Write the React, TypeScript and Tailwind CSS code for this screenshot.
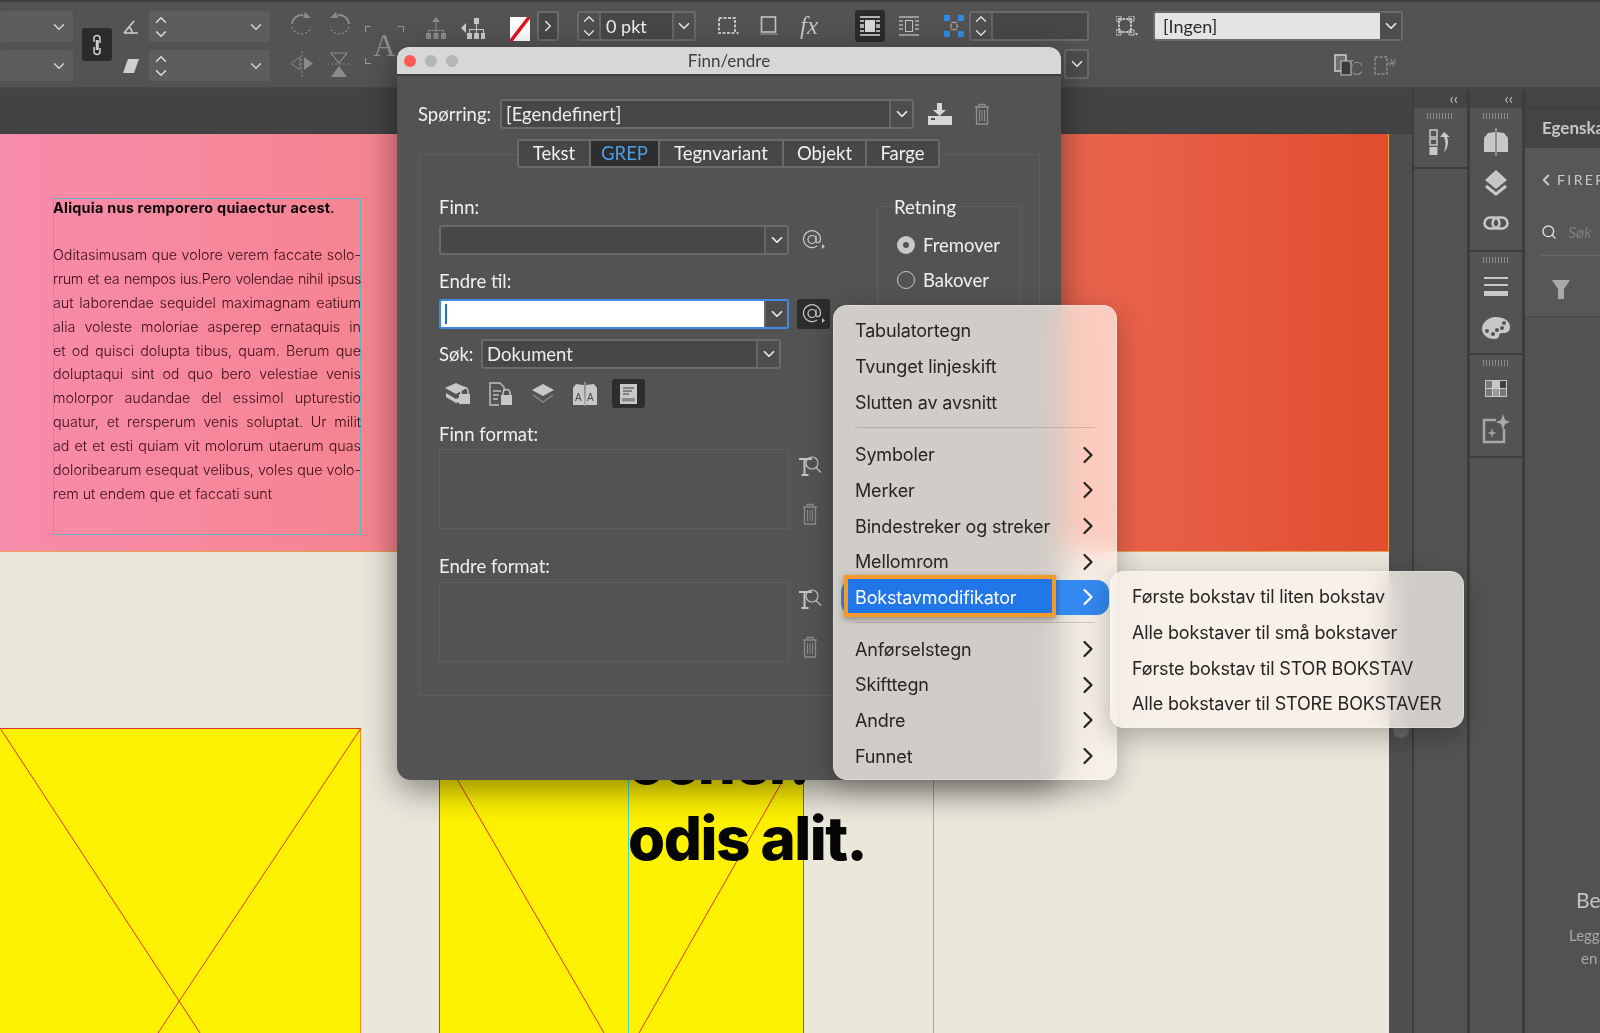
import { ChevronDown, ChevronRight, ChevronUp, ChevronLeft, Search } from "lucide-react";
import type { ReactNode } from "react";

const bodyLines = [
  "Oditasimusam que volore verem faccate solo-",
  "rrum et ea nempos ius.Pero volendae nihil ipsus",
  "aut laborendae sequidel maximagnam eatium",
  "alia voleste moloriae asperep ernataquis in",
  "et od quisci dolupta tibus, quam. Berum que",
  "doluptaqui sint od quo bero velestiae venis",
  "molorpor audandae del essimol upturestio",
  "quatur, et rersperum venis soluptat. Ur milit",
  "ad et et esti quiam vit molorum utaerum quas",
  "doloribearum esequat velibus, voles que volo-",
];

const menuTop = ["Tabulatortegn", "Tvunget linjeskift", "Slutten av avsnitt"];
const menuMid = ["Symboler", "Merker", "Bindestreker og streker", "Mellomrom"];
const menuEnd = ["Anførselstegn", "Skifttegn", "Andre", "Funnet"];
const subItems = [
  "Første bokstav til liten bokstav",
  "Alle bokstaver til små bokstaver",
  "Første bokstav til STOR BOKSTAV",
  "Alle bokstaver til STORE BOKSTAVER",
];

function Ico({ w, h, children, className }: { w: number; h: number; children: ReactNode; className?: string }) {
  return (
    <svg width={w} height={h} viewBox={`0 0 ${w} ${h}`} className={className} fill="none">
      {children}
    </svg>
  );
}

function Stepper() {
  return (
    <div className="flex flex-col items-center justify-center text-[#e2e2e2]">
      <ChevronUp size={18} strokeWidth={1.8} />
      <ChevronDown size={18} strokeWidth={1.8} className="-mt-[4px]" />
    </div>
  );
}

function DimField({ w, stepper }: { w: string; stepper?: boolean }) {
  return (
    <div className={`h-[31px] ${w} bg-[#5d5d5d] rounded-[2px] flex items-center justify-between pl-[3px] pr-[5px] text-[#d4d4d4]`}>
      {stepper ? <Stepper /> : <span />}
      <ChevronDown size={18} strokeWidth={2} />
    </div>
  );
}

function Trash({ c = "#8f8f8f" }: { c?: string }) {
  return (
    <Ico w={16} h={22}>
      <path d="M1 4h14M5 4V1.500h6V4M2.500 4v17h11V4" stroke={c} strokeWidth="1.300" />
      <path d="M5.500 7v11M8 7v11M10.500 7v11" stroke={c} strokeWidth="1" />
    </Ico>
  );
}

function TypeSearch() {
  return (
    <Ico w={24} h={22}>
      <path d="M1 4h13M6.500 4v15M3.500 20h7" stroke="#c4c4c4" strokeWidth="2" />
      <circle cx="14" cy="8" r="6" stroke="#c4c4c4" strokeWidth="1.200" />
      <path d="M18 12.500l5 5" stroke="#c4c4c4" strokeWidth="1.300" />
    </Ico>
  );
}

function AtButton({ active }: { active?: boolean }) {
  return (
    <div className={`w-[33px] h-[30px] rounded-[3px] flex items-center justify-center ${active ? "bg-[#2d2d2d]" : ""}`}>
      <Ico w={24} h={22}>
        <circle cx="10" cy="10.500" r="4" stroke="#c9c9c9" strokeWidth="1.200" />
        <path d="M14 6.500v5.500c0 2.600 4.500 2.600 4.500-2a8.500 8.500 0 1 0-3.500 7" stroke="#c9c9c9" strokeWidth="1.200" />
        <path d="M20 15l3 2.500-3 2.500z" fill="#c9c9c9" />
      </Ico>
    </div>
  );
}

function ComboField({ w, sep, light, focus, children }: { w: string; sep: string; light?: boolean; focus?: boolean; children?: ReactNode }) {
  return (
    <div className={`h-[30px] ${w} flex rounded-[3px] border-2 overflow-hidden ${focus ? "border-[#3f8be6]" : "border-[#6a6a6a]"}`}>
      <div className={`${sep} shrink-0 flex items-center pl-[4px] leading-none ${light ? "bg-white text-[#2a2a2a]" : "bg-[#474747] text-[#ececec]"}`}>
        {children}
      </div>
      <div className="flex-1 flex items-center justify-center bg-[#4d4d4d] border-l-2 border-[#666666] text-[#efefef]">
        <ChevronDown size={18} strokeWidth={2.2} />
      </div>
    </div>
  );
}

function Toolbar() {
  return (
    <div className="h-[89px] shrink-0 bg-[#535353] border-t-2 border-b-2 border-t-[#3b3b3b] border-b-[#474747] flex items-start pt-[9px]">
      <div className="w-[73px] flex flex-col gap-[8px]">
        <DimField w="w-[73px]" />
        <DimField w="w-[73px]" />
      </div>
      <div className="ml-[9px] mt-[17px] w-[30px] h-[33px] bg-[#2b2b2b] rounded-[3px] flex items-center justify-center">
        <Ico w={12} h={22}>
          <path d="M3 8V4.500a3 3 0 0 1 6 0V9M9 14v3.500a3 3 0 0 1-6 0V13M5.500 6v10M7 6v10" stroke="#d0d0d0" strokeWidth="1.500" />
        </Ico>
      </div>
      <div className="w-[37px] flex flex-col gap-[8px] items-center">
        <div className="h-[31px] flex items-center">
          <Ico w={16} h={14}>
            <path d="M1 13h14M1 13L11 1M9 13c0-3-1.500-5-3.500-6" stroke="#cfcfcf" strokeWidth="1.600" />
          </Ico>
        </div>
        <div className="h-[31px] flex items-center">
          <Ico w={16} h={14}>
            <path d="M5 0h11l-5 14H0z" fill="#cfcfcf" />
          </Ico>
        </div>
      </div>
      <div className="w-[121px] flex flex-col gap-[8px]">
        <DimField w="w-[121px]" stepper />
        <DimField w="w-[121px]" stepper />
      </div>
      <div className="ml-[20px] w-[60px] grid grid-cols-2 gap-y-[11px] gap-x-[14px]">
        <Ico w={24} h={29}>
          <path d="M13 4a10 10 0 0 0-11 9" stroke="#8a8a8a" strokeWidth="2" />
          <path d="M15 1l6 6h-8z" fill="#8a8a8a" />
          <path d="M2 16a10 10 0 0 0 19 0" stroke="#8a8a8a" strokeWidth="1.400" strokeDasharray="2 2" />
        </Ico>
        <Ico w={24} h={29}>
          <path d="M11 4a10 10 0 0 1 11 9" stroke="#8a8a8a" strokeWidth="2" />
          <path d="M9 1l-6 6h8z" fill="#8a8a8a" />
          <path d="M22 16a10 10 0 0 1-19 0" stroke="#8a8a8a" strokeWidth="1.400" strokeDasharray="2 2" />
        </Ico>
        <Ico w={24} h={26}>
          <path d="M10 6L1 12.500l9 6.500z" stroke="#8a8a8a" strokeWidth="1" />
          <path d="M14 6v13l9-6.500z" fill="#8a8a8a" />
          <path d="M12 0v26" stroke="#8a8a8a" strokeDasharray="2 2" />
        </Ico>
        <Ico w={24} h={26}>
          <path d="M4 2h16l-8 10z" stroke="#8a8a8a" strokeWidth="1.200" />
          <path d="M0 13h24" stroke="#8a8a8a" strokeDasharray="2 2" />
          <path d="M4 26h16l-8-11z" fill="#8a8a8a" />
        </Ico>
      </div>
      <div className="ml-[15px] mt-[15px] w-[39px] h-[38px] flex items-center justify-center relative">
        <span className="absolute left-0 top-0 w-[6px] h-[6px] border-l border-t border-[#9a9a9a]" />
        <span className="absolute left-0 bottom-0 w-[6px] h-[6px] border-l border-b border-[#9a9a9a]" />
        <span className="absolute right-0 top-0 w-[6px] h-[6px] border-r border-t border-[#9a9a9a]" />
        <span className="text-[#8f8f8f] text-[31px] leading-none font-['Liberation_Serif',serif]">A</span>
      </div>
      <div className="ml-[22px] mt-[6px] flex items-center gap-[15px]">
        <Ico w={20} h={24}>
          <path d="M10 0l4 5H6zM9.500 5h1v7h-1zM2 13h16v3h-1v-2H3v2H2zM9.500 12h1v4h-1zM0 16h5v6H0zM7.500 16h5v6h-5zM15 16h5v6h-5z" fill="#8a8a8a" />
        </Ico>
        <Ico w={24} h={24}>
          <path d="M0 11l5-5v10z" fill="#c9c9c9" />
          <path d="M13 1h5v6h-5zM15 7h1v5h-1zM8 12h15v1H8zM8 13h1v3H8zM15 13h1v3h-1zM22 13h1v3h-1zM6 16h5v6H6zM13 16h5v6h-5zM20 16h4v6h-4z" fill="#c9c9c9" />
        </Ico>
        <Ico w={20} h={24} className="ml-[10px]">
          <rect width="20" height="24" fill="#fff" />
          <path d="M0 25L20 -1" stroke="#e2141c" strokeWidth="3.500" />
        </Ico>
      </div>
      <div className="ml-[7px] w-[22px] h-[30px] border-2 border-[#6a6a6a] rounded-[3px] bg-[#474747] flex items-center justify-center text-[#e5e5e5]">
        <ChevronRight size={18} strokeWidth={2} />
      </div>
      <div className="ml-[18px] w-[119px] h-[30px] border-2 border-[#6a6a6a] rounded-[3px] flex overflow-hidden">
        <div className="w-[22px] shrink-0 bg-[#4f4f4f] border-r-2 border-[#666666] flex items-center justify-center">
          <Stepper />
        </div>
        <div className="w-[71px] bg-[#474747] text-[#f0f0f0] text-[18px] leading-[26px] pl-[5px]">0 pkt</div>
        <div className="flex-1 bg-[#4f4f4f] border-l-2 border-[#666666] flex items-center justify-center text-[#e5e5e5]">
          <ChevronDown size={18} strokeWidth={2.2} />
        </div>
      </div>
      <div className="ml-[21px] mt-[5px] flex gap-[21px]">
        <Ico w={22} h={20}>
          <rect x="2" y="2" width="16" height="15" stroke="#c4c4c4" strokeWidth="2" strokeDasharray="3 1.500" />
          <path d="M19 16l3 0-1.500 3z" fill="#c4c4c4" />
        </Ico>
        <Ico w={18} h={20}>
          <rect x="1.500" y="1" width="14" height="15" stroke="#c4c4c4" strokeWidth="1.600" />
          <rect x="0" y="17" width="18" height="2" fill="#7a7a7a" />
        </Ico>
        <span className="ml-[1px] text-[#c4c4c4] italic text-[25px] leading-[20px] font-['Liberation_Serif',serif]">fx</span>
      </div>
      <div className="ml-[37px] -mt-[1px] w-[30px] h-[32px] bg-[#2b2b2b] rounded-[3px] flex items-center justify-center">
        <Ico w={20} h={20}>
          <path d="M0 1h20M0 19h20M0 5h4M0 9h4M0 11h4M0 15h4M16 5h4M16 9h4M16 11h4M16 15h4" stroke="#e0e0e0" strokeWidth="1.500" />
          <rect x="5" y="4" width="10" height="12" fill="#d8d8d8" />
        </Ico>
      </div>
      <div className="ml-[14px] mt-[5px]">
        <Ico w={20} h={20}>
          <path d="M0 1h20M0 19h20M0 5h4M0 9h4M0 13h4M16 5h4M16 9h4M16 13h4" stroke="#b4b4b4" strokeWidth="1.300" />
          <rect x="6.500" y="4.500" width="7" height="11" stroke="#c4c4c4" />
        </Ico>
      </div>
      <div className="ml-[25px] mt-[4px]">
        <Ico w={20} h={22}>
          <path d="M7 7.500h6M7 14.500h6M7 9v4M13 9v4" stroke="#9a9a9a" strokeWidth="1.500" />
          <path d="M0 0h6v6H0zM14 0h6v6h-6zM0 16h6v6H0zM14 16h6v6h-6z" fill="#2f8ae5" />
        </Ico>
      </div>
      <div className="ml-[5px] w-[120px] flex flex-col gap-[8px] items-end">
        <div className="w-[120px] h-[30px] border-2 border-[#6a6a6a] rounded-[3px] flex overflow-hidden">
          <div className="w-[22px] shrink-0 bg-[#4f4f4f] border-r-2 border-[#666666] flex items-center justify-center">
            <Stepper />
          </div>
          <div className="flex-1 bg-[#474747]" />
        </div>
        <div className="w-[25px] h-[30px] border-2 border-[#6a6a6a] rounded-[3px] bg-[#4d4d4d] flex items-center justify-center text-[#e8e8e8]">
          <ChevronDown size={18} strokeWidth={2.2} />
        </div>
      </div>
      <div className="ml-[27px] mt-[5px]">
        <Ico w={22} h={20}>
          <rect x="3" y="3" width="12" height="13" stroke="#c4c4c4" strokeWidth="2" strokeDasharray="2.500 1" />
          <path d="M0 0h5v5H0zM13 0h5v5h-5zM0 14h5v5H0zM13 14h5v5h-5z" stroke="#c4c4c4" />
          <path d="M19 17h3l-1.500 3z" fill="#c4c4c4" />
        </Ico>
      </div>
      <div className="ml-[15px] flex flex-col items-end">
        <div className="h-[30px] w-[250px] border-2 border-[#6a6a6a] rounded-[3px] flex overflow-hidden">
          <div className="w-[225px] bg-[#e4e4e4] text-[#2b2b2b] text-[18px] leading-[26px] pl-[8px]">[Ingen]</div>
          <div className="flex-1 bg-[#4d4d4d] flex items-center justify-center text-[#efefef]">
            <ChevronDown size={18} strokeWidth={2.2} />
          </div>
        </div>
        <div className="mt-[13px] mr-[5px] flex gap-[12px]">
          <Ico w={28} h={24}>
            <rect x="1" y="1" width="11" height="16" fill="#6e6e6e" stroke="#d0d0d0" strokeWidth="1.500" />
            <rect x="7" y="7" width="10" height="14" fill="#3a3a3a" stroke="#c8c8c8" />
            <path d="M20 9a6 6 0 1 1-1 10M19 6l-3 3 3 3" stroke="#8f8f8f" strokeWidth="1.200" />
          </Ico>
          <Ico w={24} h={24}>
            <rect x="1" y="3" width="12" height="17" stroke="#8f8f8f" strokeWidth="1.500" strokeDasharray="3 1.500" />
            <path d="M15 12l7-7M17 5l3 8M14 9h8" stroke="#8f8f8f" />
          </Ico>
        </div>
      </div>
    </div>
  );
}

function Grip() {
  return <div className="mx-auto mt-[5px] w-[27px] h-[6px] bg-[repeating-linear-gradient(90deg,#8c8c8c_0_1px,transparent_1px_3px)]" />;
}

function Canvas() {
  return (
    <div className="relative flex-1 flex flex-col overflow-hidden">
      <div className="h-[418px] border-b border-r border-[#e8a050] bg-[linear-gradient(90deg,#f78cab_0%,#f6848f_28%,#eb6751_76%,#e04d2e_100%)]" />
      <div className="flex-1 bg-[#ebe7db]" />

      <div className="absolute left-[53px] top-[64px] w-[308px] h-[337px] border border-[#5fb6c6] text-[#3b0b16] font-['Inter',sans-serif]">
        <div className="-mx-px -mt-px">
          <p className="text-[14.4px] leading-[20px] text-[#0a0508] font-bold tracking-[0.25px] whitespace-nowrap">
            Aliquia nus remporero quiaectur acest<span className="font-normal">.</span>
          </p>
          <div className="mt-[25px] text-[14.3px] font-light">
            {bodyLines.map((line, i) => (
              <p
                key={line}
                className={`h-[23.9px] leading-[23.9px] text-justify [text-align-last:justify] whitespace-nowrap ${i === 1 ? "tracking-[-0.35px]" : ""}`}
              >
                {line}
              </p>
            ))}
            <p className="h-[23.9px] leading-[23.9px]">rem ut endem que et faccati sunt</p>
          </div>
        </div>
      </div>

      <svg width="361" height="305" viewBox="0 0 361 305" className="absolute left-[0px] top-[594px]">
        <rect x="-2" y="0.500" width="363" height="320" fill="#fff200" stroke="#e8302a" />
        <path d="M0 0L200 305M361 0L158 305" stroke="#e8302a" />
      </svg>
      <svg width="365" height="305" viewBox="0 0 365 305" className="absolute left-[439px] top-[594px]">
        <rect x="0.500" y="0.500" width="364" height="320" fill="#fff200" stroke="#e8302a" />
        <path d="M0 20L165 305M364 17L200 305" stroke="#e8302a" />
      </svg>
      <div className="absolute left-[628px] top-[594px] bottom-0 w-[306px] border-x border-[#3fd6d2]" />
      <div className="absolute left-[628px] top-[590px] text-[#050505] text-[60px] leading-[76px] font-extrabold tracking-[-1.5px] font-['Inter',sans-serif] whitespace-nowrap">
        <p>ocner.</p>
        <p>odis alit.</p>
      </div>
    </div>
  );
}

function Panels() {
  return (
    <div className="w-[188px] shrink-0 bg-[#3d3d3d] flex gap-[3px] pl-[2px]">
      <div className="w-[53px] flex flex-col gap-[2px]">
        <div className="h-[19px] bg-[#444444] text-[#c8c8c8] flex items-center justify-end pr-[9px] text-[15px] leading-none">‹‹</div>
        <div className="h-[59px] -mt-[2px] bg-[#535353]">
          <Grip />
          <div className="flex justify-center mt-[10px]">
            <Ico w={24} h={26}>
              <path d="M1 1h7v7H1zM1 10h7v6H1z" stroke="#c8c8c8" strokeWidth="1.500" />
              <rect x="0.500" y="18" width="8" height="8" fill="#c8c8c8" />
              <path d="M15 3l6 5-3 0c2 5 1 11-3 15 2-6 2-11 0-15h-4z" fill="#c8c8c8" />
            </Ico>
          </div>
        </div>
        <div className="flex-1 bg-[#535353]" />
      </div>
      <div className="w-[52px] flex flex-col gap-[2px]">
        <div className="h-[19px] bg-[#444444] text-[#c8c8c8] flex items-center justify-end pr-[9px] text-[15px] leading-none">‹‹</div>
        <div className="h-[142px] -mt-[2px] bg-[#535353] flex flex-col items-center">
          <Grip />
          <div className="mt-[9px]">
            <Ico w={26} h={28}>
              <path d="M12 4L5 5 1 10v14h11zM14 4l7 1 4 5v14H14z" fill="#c8c8c8" />
              <path d="M13 0v28" stroke="#c8c8c8" />
            </Ico>
          </div>
          <div className="mt-[14px]">
            <Ico w={24} h={26}>
              <path d="M12 0l11 10-11 9L1 10z" fill="#c8c8c8" />
              <path d="M2 16l10 8 10-8" stroke="#c8c8c8" strokeWidth="3" />
            </Ico>
          </div>
          <div className="mt-[20px]">
            <Ico w={26} h={14}>
              <rect x="1.500" y="1.500" width="15" height="11" rx="5.500" stroke="#c8c8c8" strokeWidth="2.500" />
              <rect x="9.500" y="1.500" width="15" height="11" rx="5.500" stroke="#c8c8c8" strokeWidth="2.500" />
            </Ico>
          </div>
        </div>
        <div className="h-[101px] bg-[#535353] flex flex-col items-center">
          <Grip />
          <div className="mt-[14px]">
            <Ico w={24} h={20}>
              <path d="M0 1h24M0 8h24" stroke="#c8c8c8" strokeWidth="2" />
              <rect y="14" width="24" height="5" fill="#c8c8c8" />
            </Ico>
          </div>
          <div className="mt-[20px]">
            <Ico w={28} h={22}>
              <path d="M14 0c8 0 14 4 14 10s-5 6-8 6c-2 0-3 1-3 3s-2 3-5 3C5 22 0 17 0 12 0 6 6 0 14 0z" fill="#c8c8c8" />
              <circle cx="5" cy="14" r="2" fill="#535353" />
              <circle cx="11" cy="17" r="2" fill="#535353" />
              <circle cx="15" cy="13" r="2" fill="#535353" />
              <circle cx="20" cy="11" r="2" fill="#535353" />
              <circle cx="22" cy="6" r="2" fill="#535353" />
            </Ico>
          </div>
        </div>
        <div className="h-[101px] bg-[#535353] flex flex-col items-center">
          <Grip />
          <div className="mt-[14px] w-[22px] h-[17px] grid grid-cols-3 grid-rows-2 gap-[1px] bg-[#c8c8c8] p-[1px]">
            <span className="bg-[#777777]" />
            <span className="bg-[#c8c8c8]" />
            <span className="bg-[#3f3f3f]" />
            <span className="bg-[#777777]" />
            <span className="bg-[#9a9a9a]" />
            <span className="bg-[#777777]" />
          </div>
          <div className="mt-[17px]">
            <Ico w={28} h={30}>
              <path d="M14 6H2v22h20V15" stroke="#a8a8a8" strokeWidth="2.500" />
              <path d="M21 0l2 6 5 2-5 2-2 6-2-6-5-2 5-2zM10 14l1 4 4 1-4 1-1 4-1-4-4-1 4-1z" fill="#a8a8a8" />
            </Ico>
          </div>
        </div>
        <div className="flex-1 bg-[#535353]" />
      </div>
      <div className="flex-1 min-w-0 overflow-hidden flex flex-col whitespace-nowrap font-['Lato',sans-serif]">
        <div className="h-[19px] bg-[#444444]" />
        <div className="h-[40px] bg-[#444444] border-t border-[#3d3d3d] pl-[17px] text-[17px] font-bold leading-[38px] text-[#c6c6c6]">Egenskaper</div>
        <div className="h-[169px] bg-[#575757] pt-[21px] pl-[16px] border-b border-[#484848]">
          <div className="flex items-center w-max text-[#c8c8c8] text-[14px] tracking-[2.4px]">
            <ChevronLeft size={18} strokeWidth={2.6} className="shrink-0 -ml-[4px] mr-[2px]" />
            FIREFLY
          </div>
          <div className="mt-[30px] flex items-center w-max text-[#808080] text-[16px] italic">
            <Search size={16} strokeWidth={2} className="shrink-0 text-[#e0e0e0] mr-[11px]" />
            Søk
          </div>
          <div className="mt-[11px] h-px bg-[#6a6a6a]" />
          <div className="mt-[24px] ml-[11px] w-[300px]">
            <Ico w={18} h={20}>
              <path d="M0 0h18l-6 9v10H6V9z" fill="#a8a8a8" />
            </Ico>
          </div>
        </div>
        <div className="flex-1 bg-[#525252] pt-[571px] pl-[51px] text-[#c4c4c4]">
          <p className="text-[21px] leading-[24px]">Be</p>
          <p className="mt-[13px] -ml-[7px] text-[15px] leading-[20px] text-[#a8a8a8]">Legg</p>
          <p className="mt-[3px] ml-[5px] text-[15px] leading-[20px] text-[#a8a8a8]">en</p>
        </div>
      </div>
    </div>
  );
}

function Dialog() {
  return (
    <div className="absolute left-[397px] top-[47px] w-[664px] h-[733px] rounded-t-[12px] rounded-b-[14px] bg-[#535353] overflow-hidden shadow-[0_10px_34px_rgba(0,0,0,0.45)] text-[#f0f0f0] text-[18.5px] leading-[24px]">
      <div className="h-[29px] bg-[#d7d7d7] border-b-2 border-[#3f3f3f] relative flex items-center justify-center text-[#3d3d3d] text-[17px]">
        <div className="absolute left-[7px] top-[8px] flex gap-[9px]">
          <span className="w-[12px] h-[12px] rounded-full bg-[#fb5a55]" />
          <span className="w-[12px] h-[12px] rounded-full bg-[#b5b5b5]" />
          <span className="w-[12px] h-[12px] rounded-full bg-[#b5b5b5]" />
        </div>
        Finn/endre
      </div>

      <div className="mt-[23px] pl-[21px] flex items-center h-[30px]">
        <span className="w-[82px]">Spørring:</span>
        <ComboField w="w-[414px]" sep="w-[387px]">[Egendefinert]</ComboField>
        <div className="ml-[14px]">
          <Ico w={24} h={22}>
            <path d="M9 0h5v7h4l-6.500 6L5 7h4z" fill="#d6d6d6" />
            <rect y="13" width="24" height="9" fill="#d6d6d6" />
            <rect x="3" y="15" width="4" height="2" fill="#535353" />
          </Ico>
        </div>
        <div className="ml-[22px]">
          <Trash />
        </div>
      </div>

      <div className="mt-[25px] ml-[22px] w-[621px] h-[542px] border border-[#5e5e5e] pl-[19px] relative">
        <div className="-mt-[16px] flex justify-center -ml-[21px]">
          <div className="flex h-[29px] border-2 border-[#6a6a6a] rounded-[3px] bg-[#474747] divide-x-2 divide-[#6a6a6a] leading-[25px]">
            <div className="w-[72px] text-center">Tekst</div>
            <div className="w-[69px] text-center bg-[#2d2d2d] text-[#4c9ee6]">GREP</div>
            <div className="w-[124px] text-center">Tegnvariant</div>
            <div className="w-[83px] text-center">Objekt</div>
            <div className="w-[71px] text-center">Farge</div>
          </div>
        </div>

        <div className="flex">
          <div className="w-[437px]">
            <p className="mt-[27px]">Finn:</p>
            <div className="mt-[6px] flex items-center gap-[8px]">
              <ComboField w="w-[350px]" sep="w-[323px]" />
              <AtButton />
            </div>
            <p className="mt-[14px]">Endre til:</p>
            <div className="mt-[6px] flex items-center gap-[8px]">
              <ComboField w="w-[350px]" sep="w-[323px]" light focus>
                <span className="block w-[2px] h-[20px] bg-[#1f6fd6]" />
              </ComboField>
              <AtButton active />
            </div>
            <div className="mt-[10px] flex items-center">
              <span className="w-[42px]">Søk:</span>
              <ComboField w="w-[300px]" sep="w-[273px]">Dokument</ComboField>
            </div>
            <div className="mt-[10px] flex items-center h-[29px]">
              <div className="ml-[6px]">
                <Ico w={26} h={24}>
                  <path d="M11 1l11 5-11 6L0 6z" fill="#c8c8c8" />
                  <path d="M1 11l10 6 4-2v5l-4 1L1 15z" fill="#c8c8c8" />
                  <rect x="14" y="12" width="11" height="10" fill="#c8c8c8" />
                  <path d="M16 12V9a3.500 3.500 0 0 1 7 0v3" stroke="#c8c8c8" strokeWidth="1.500" />
                </Ico>
              </div>
              <div className="ml-[18px]">
                <Ico w={24} h={24}>
                  <path d="M10 23H1V1h10l4 4v4" stroke="#c0c0c0" strokeWidth="1.400" />
                  <path d="M4 9h8M4 13h6M4 17h5" stroke="#c0c0c0" strokeWidth="1.400" />
                  <rect x="12" y="13" width="11" height="10" fill="#c8c8c8" />
                  <path d="M14 13v-2a3.500 3.500 0 0 1 7 0v2" stroke="#c8c8c8" strokeWidth="1.500" />
                </Ico>
              </div>
              <div className="ml-[18px]">
                <Ico w={24} h={22}>
                  <path d="M12 1l11 6-11 6L1 7z" fill="#c8c8c8" />
                  <path d="M2 12l10 7 10-7" stroke="#8a8a8a" strokeWidth="1.500" />
                </Ico>
              </div>
              <div className="ml-[18px]">
                <Ico w={24} h={24}>
                  <path d="M11 3L3 2 0 6v17h11.500zM13 3l8-1 3 4v17H12.500z" fill="#c8c8c8" />
                  <path d="M12 0v24" stroke="#c8c8c8" />
                  <text x="2" y="19" fontSize="10" fill="#4a4a4a" fontFamily="Liberation Sans">A</text>
                  <text x="14" y="19" fontSize="10" fill="#4a4a4a" fontFamily="Liberation Sans">A</text>
                </Ico>
              </div>
              <div className="ml-[15px] w-[33px] h-[29px] bg-[#2d2d2d] rounded-[3px] flex items-center justify-center">
                <Ico w={17} h={20}>
                  <rect width="17" height="20" fill="#c8c8c8" />
                  <path d="M3 4h11M3 7h9M3 10h6" stroke="#3a3a3a" />
                  <rect x="2" y="14" width="13" height="3.500" fill="#8a8a8a" />
                </Ico>
              </div>
            </div>
            <p className="mt-[14px]">Finn format:</p>
            <div className="mt-[3px] flex">
              <div className="w-[350px] h-[80px] border border-[#5e5e5e]" />
              <div className="ml-[9px] flex flex-col items-center pt-[6px]">
                <TypeSearch />
                <div className="mt-[26px]"><Trash c="#8a8a8a" /></div>
              </div>
            </div>
            <p className="mt-[25px]">Endre format:</p>
            <div className="mt-[4px] flex">
              <div className="w-[350px] h-[80px] border border-[#5e5e5e]" />
              <div className="ml-[9px] flex flex-col items-center pt-[6px]">
                <TypeSearch />
                <div className="mt-[26px]"><Trash c="#8a8a8a" /></div>
              </div>
            </div>
          </div>
          <div className="ml-[1px] mt-[38px] w-[144px] h-[200px] border border-[#5e5e5e] pl-[15px] relative">
            <p className="-mt-[12px] bg-[#535353] w-fit px-[1px]">Retning</p>
            <div className="mt-[14px] flex items-center gap-[8px] h-[24px]">
              <span className="w-[18px] h-[18px] rounded-full bg-[#c8c8c8] ml-[4px] flex items-center justify-center">
                <span className="w-[6px] h-[6px] rounded-full bg-[#535353]" />
              </span>
              Fremover
            </div>
            <div className="mt-[11px] flex items-center gap-[8px] h-[24px]">
              <span className="w-[18px] h-[18px] rounded-full border border-[#c8c8c8] ml-[4px]" />
              Bakover
            </div>
          </div>
        </div>
      </div>
    </div>
  );
}

function MenuRow({ label, active }: { label: string; active?: boolean }) {
  return (
    <div
      className={`h-[35.67px] flex items-center justify-between ${
        active ? "mx-[7px] pl-[14px] pr-[7px] rounded-[12px] bg-[#3389f0] text-white" : "pl-[21px] pr-[14px]"
      }`}
    >
      <span className="relative z-10">{label}</span>
      <ChevronRight size={28} strokeWidth={1.9} className="relative z-10" />
    </div>
  );
}

function Menus() {
  const glass =
    "absolute rounded-[14px] bg-[#f9f4ee]/75 backdrop-blur-[14px] backdrop-saturate-150 shadow-[0_8px_28px_rgba(0,0,0,0.28)] border border-white/30 text-[#262424] text-[18px] font-['Inter',sans-serif] tracking-[-0.15px]";
  return (
    <>
      <div className={`${glass} left-[833px] top-[305px] w-[284px] h-[475px] pt-[7px]`}>
        {menuTop.map((l) => (
          <div key={l} className="h-[35.67px] flex items-center pl-[21px]">
            {l}
          </div>
        ))}
        <div className="mx-[21px] mt-[7px] mb-[9px] h-px bg-black/15" />
        {menuMid.map((l) => (
          <MenuRow key={l} label={l} />
        ))}
        <MenuRow label="Bokstavmodifikator" active />
        <div className="mx-[21px] mt-[7px] mb-[8px] h-px bg-black/15" />
        {menuEnd.map((l) => (
          <MenuRow key={l} label={l} />
        ))}
        <div className="absolute z-[1] left-[10px] top-[269px] w-[212px] h-[42px] bg-[#2277e8] border-[4px] border-[#f29a2c] shadow-[0_2px_6px_rgba(0,0,0,0.35)]" />
      </div>
      <div className={`${glass} left-[1110px] top-[571px] w-[354px] h-[157px] pt-[7px]`}>
        {subItems.map((l) => (
          <div key={l} className="h-[35.67px] flex items-center pl-[21px] whitespace-nowrap">
            {l}
          </div>
        ))}
      </div>
    </>
  );
}

export default function App() {
  return (
    <div className="relative w-[1600px] h-[1033px] overflow-hidden bg-[#535353] flex flex-col font-['Lato',sans-serif]">
      <Toolbar />
      <div className="flex-1 flex min-h-0">
        <div className="flex-1 min-w-0 flex flex-col">
          <div className="h-[45px] shrink-0 bg-[#434343] border-b border-[#3d3d3d]" />
          <div className="flex-1 flex min-h-0">
            <Canvas />
            <div className="w-[23px] shrink-0 bg-[#4f4f4f] pt-[588px]">
              <span className="block ml-[4px] w-[16px] h-[16px] rounded-full bg-[#6a6a6a]" />
            </div>
          </div>
        </div>
        <Panels />
      </div>
      <Dialog />
      <Menus />
    </div>
  );
}
